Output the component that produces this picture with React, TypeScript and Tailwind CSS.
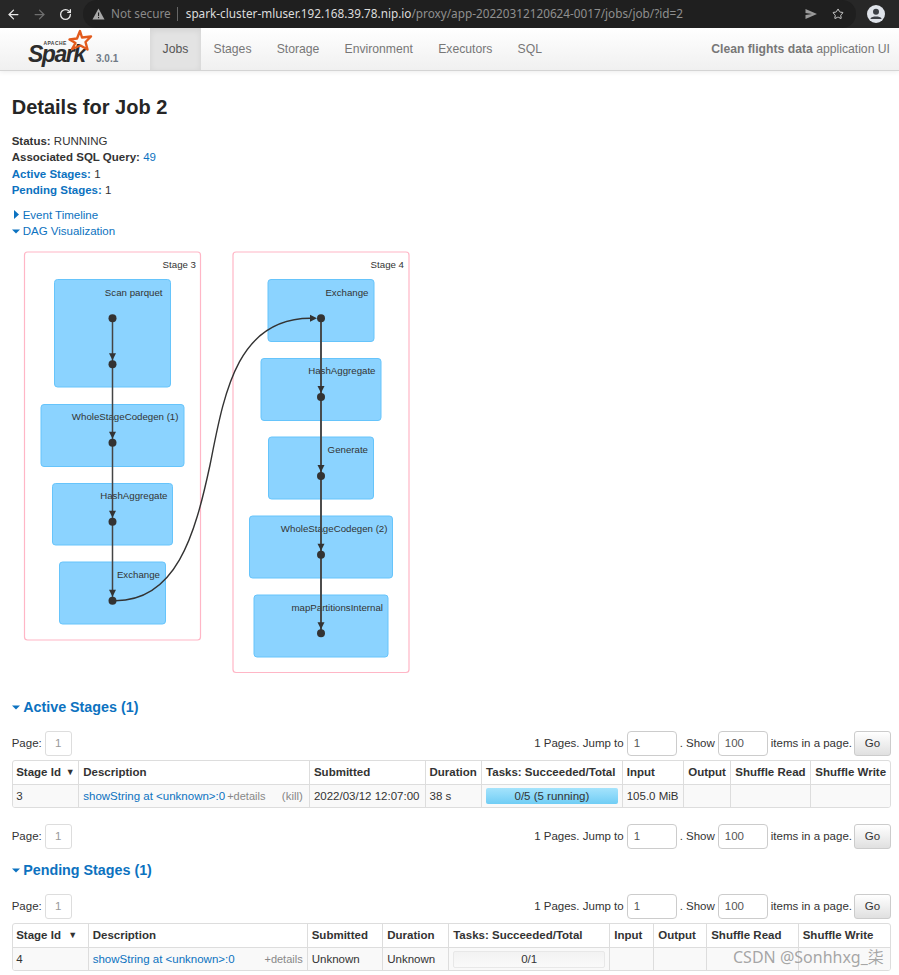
import React from "react";
import { ArrowLeft, ArrowRight, RotateCw, Star } from "lucide-react";

function Caret({ open }: { open: boolean }) {
  return open ? (
    <svg width="8" height="5" viewBox="0 0 8 5" className="shrink-0"><path d="M0 0.5H8L4 4.5Z" fill="#0c72c0" /></svg>
  ) : (
    <svg width="5" height="9" viewBox="0 0 5 9" className="shrink-0 ml-[2px]"><path d="M0 0V9L5 4.5Z" fill="#0c72c0" /></svg>
  );
}

function NavItem({ label, active }: { label: string; active?: boolean }) {
  return (
    <div className={active ? "h-full flex items-center px-[12.6px] bg-[#e3e3e3] text-[#555] shadow-[inset_0_2px_6px_rgba(0,0,0,0.08)]" : "h-full flex items-center px-[12.6px] text-[#777]"}>
      {label}
    </div>
  );
}

function Pagination() {
  return (
    <div className="flex items-center justify-between h-[25px] text-[11.5px] text-[#333]">
      <div className="flex items-center gap-[3px]">
        <span>Page:</span>
        <span className="w-[27px] h-[25px] flex items-center justify-center border border-[#ddd] rounded-[3px] text-[#999] bg-white">1</span>
      </div>
      <div className="flex items-center">
        <span>1 Pages. Jump to</span>
        <span className="ml-[3px] w-[50px] h-[25px] flex items-center pl-[6px] border border-[#ccc] rounded-[4px] bg-white text-[#555]">1</span>
        <span className="ml-[3px]">. Show</span>
        <span className="ml-[3px] w-[50px] h-[25px] flex items-center pl-[6px] border border-[#ccc] rounded-[4px] bg-white text-[#555]">100</span>
        <span className="ml-[3px]">items in a page.</span>
        <span className="ml-[2px] w-[37px] h-[25px] flex items-center justify-center border border-[#ccc] rounded-[3px] bg-gradient-to-b from-white to-[#e0e0e0] text-[#333]">Go</span>
      </div>
    </div>
  );
}

const th = "h-[23px] px-[4px] first:px-[3.5px] text-left font-bold text-[#333] border-l border-[#ddd] first:border-l-0 whitespace-nowrap overflow-hidden";
const td = "h-[23px] px-[4px] first:px-[3.5px] text-[#333] border-l border-t border-[#ddd] first:border-l-0 whitespace-nowrap overflow-hidden";

function ActiveTable() {
  return (
    <div className="border border-[#ddd] rounded-[3px] overflow-hidden text-[11.5px] h-[48px]">
      <table className="w-full table-fixed border-collapse">
        <colgroup>
          <col className="w-[66px]" /><col className="w-[230.5px]" /><col className="w-[115.5px]" /><col className="w-[56.5px]" /><col className="w-[140.5px]" /><col className="w-[61.5px]" /><col className="w-[47px]" /><col className="w-[80px]" /><col className="w-[79px]" />
        </colgroup>
        <thead>
          <tr>
            <th className={th}><div className="flex items-center justify-between"><span>Stage Id</span><span className="text-[9px]">▼</span></div></th>
            <th className={th}>Description</th>
            <th className={th}>Submitted</th>
            <th className={th}>Duration</th>
            <th className={th}>Tasks: Succeeded/Total</th>
            <th className={th}>Input</th>
            <th className={th}>Output</th>
            <th className={th}>Shuffle Read</th>
            <th className={th}>Shuffle Write</th>
          </tr>
        </thead>
        <tbody className="bg-[#f9f9f9]">
          <tr>
            <td className={td}>3</td>
            <td className={td}>
              <div className="flex items-center pr-[2px]">
                <span className="text-[#0c72c0]">showString at &lt;unknown&gt;:0</span>
                <span className="ml-[2px] text-[11px] text-[#888]">+details</span>
                <span className="ml-auto text-[#888]">(kill)</span>
              </div>
            </td>
            <td className={td}>2022/03/12 12:07:00</td>
            <td className={td}>38 s</td>
            <td className={td}>
              <div className="h-[16px] rounded-[2px] bg-gradient-to-b from-[#a4e3fc] to-[#6fcdf5] flex items-center justify-center">0/5 (5 running)</div>
            </td>
            <td className={td}>105.0 MiB</td>
            <td className={td}></td>
            <td className={td}></td>
            <td className={td}></td>
          </tr>
        </tbody>
      </table>
    </div>
  );
}

function PendingTable() {
  return (
    <div className="border border-[#ddd] rounded-[3px] overflow-hidden text-[11.5px] h-[48px]">
      <table className="w-full table-fixed border-collapse">
        <colgroup>
          <col className="w-[75.5px]" /><col className="w-[219px]" /><col className="w-[75.5px]" /><col className="w-[66px]" /><col className="w-[161px]" /><col className="w-[44px]" /><col className="w-[53px]" /><col className="w-[91.5px]" /><col className="w-[92px]" />
        </colgroup>
        <thead>
          <tr>
            <th className={th}><div className="flex items-center justify-between pr-[7px]"><span>Stage Id</span><span className="text-[9px]">▼</span></div></th>
            <th className={th}>Description</th>
            <th className={th}>Submitted</th>
            <th className={th}>Duration</th>
            <th className={th}>Tasks: Succeeded/Total</th>
            <th className={th}>Input</th>
            <th className={th}>Output</th>
            <th className={th}>Shuffle Read</th>
            <th className={th}>Shuffle Write</th>
          </tr>
        </thead>
        <tbody className="bg-[#f9f9f9]">
          <tr>
            <td className={td}>4</td>
            <td className={td}>
              <div className="flex items-center">
                <span className="text-[#0c72c0]">showString at &lt;unknown&gt;:0</span>
                <span className="ml-auto text-[11px] text-[#888]">+details</span>
              </div>
            </td>
            <td className={td}>Unknown</td>
            <td className={td}>Unknown</td>
            <td className={td}>
              <div className="h-[17px] rounded-[2px] border border-[#e8e8e8] bg-gradient-to-b from-[#f2f2f2] to-[#fafafa] flex items-center justify-center">0/1</div>
            </td>
            <td className={td}></td>
            <td className={td}></td>
            <td className={td}></td>
            <td className={td}></td>
          </tr>
        </tbody>
      </table>
    </div>
  );
}

const nodes = [
  { x: 54.5, y: 279.5, w: 116, h: 107.5, label: "Scan parquet", tx: 162.5, ty: 295.5 },
  { x: 41, y: 404.5, w: 143, h: 62, label: "WholeStageCodegen (1)", tx: 178.5, ty: 420 },
  { x: 52.5, y: 483.5, w: 120, h: 61.5, label: "HashAggregate", tx: 167.5, ty: 499 },
  { x: 59.5, y: 562, w: 106, h: 62, label: "Exchange", tx: 160, ty: 578 },
  { x: 268, y: 279.5, w: 106, h: 62, label: "Exchange", tx: 368.5, ty: 295.5 },
  { x: 261, y: 358.5, w: 120, h: 62, label: "HashAggregate", tx: 375.5, ty: 374 },
  { x: 268.5, y: 437, w: 105, h: 62, label: "Generate", tx: 368, ty: 453 },
  { x: 249.5, y: 516, w: 143, h: 62, label: "WholeStageCodegen (2)", tx: 387.5, ty: 532 },
  { x: 254, y: 595, w: 134, h: 62, label: "mapPartitionsInternal", tx: 383, ty: 611 },
];
const left = [318.3, 364.3, 442.8, 521.7, 600.7];
const right = [318.3, 397, 476, 554.7, 633.3];

function Dag() {
  return (
    <svg width="410" height="435" viewBox="12 245 410 435" className="block">
      <rect x="24.5" y="252" width="176" height="388" rx="3" fill="#fff" stroke="#ffb6c6" strokeWidth="1.2" />
      <rect x="233" y="252" width="176" height="420.5" rx="3" fill="#fff" stroke="#ffb6c6" strokeWidth="1.2" />
      <text x="196" y="267.5" textAnchor="end" fontSize="9.7" fill="#333">Stage 3</text>
      <text x="404" y="267.5" textAnchor="end" fontSize="9.7" fill="#333">Stage 4</text>
      {nodes.map((n) => (
        <g key={n.label + n.x}>
          <rect x={n.x} y={n.y} width={n.w} height={n.h} rx="3" fill="#8bd3ff" stroke="#66c4fb" strokeWidth="1" />
          <text x={n.tx} y={n.ty} textAnchor="end" fontSize="9.7" fill="#333">{n.label}</text>
        </g>
      ))}
      <path d="M112.5 318V600" stroke="#444" strokeWidth="1.5" />
      <path d="M321 318V633" stroke="#444" strokeWidth="1.9" />
      <path d="M112.5 600.7C176 603 195 535 210 465C224 395 236 318 311 318.3" fill="none" stroke="#333" strokeWidth="1.4" />
      <path d="M310 314.8L317 318.3L310 321.8Z" fill="#333" />
      {left.map((y) => <circle key={y} cx="112.5" cy={y} r="4" fill="#333" />)}
      {right.map((y) => <circle key={y} cx="321" cy={y} r="4" fill="#333" />)}
      {left.slice(1).map((y) => <path key={y} d={`M109 ${y - 11}H116L112.5 ${y - 4}Z`} fill="#333" />)}
      {right.slice(1).map((y) => <path key={y} d={`M317.5 ${y - 11}H324.5L321 ${y - 4}Z`} fill="#333" />)}
    </svg>
  );
}

export default function App() {
  return (
    <div className="relative w-[899px] h-[975px] overflow-hidden bg-white font-['Liberation_Sans',Arial,sans-serif]">
      {/* browser bar */}
      <div className="h-[28px] bg-[#272727] flex items-center text-[11.75px] font-['Noto_Sans','Open_Sans',sans-serif]">
        <ArrowLeft size={15} className="ml-[6px] text-[#e8e8e8]" />
        <ArrowRight size={15} className="ml-[11px] text-[#6f6f6f]" />
        <RotateCw size={13} className="ml-[12px] text-[#e8e8e8]" strokeWidth={2.4} />
        <div className="ml-[11px] h-[28px] w-[773px] rounded-full bg-[#1f1f1f] flex items-center">
          <svg width="13" height="12" viewBox="0 0 13 12" className="ml-[9px]"><path d="M6.5 0.5L12.5 11.5H0.5Z" fill="#a8a8a8" /><rect x="6" y="4.5" width="1.1" height="3.6" fill="#1f1f1f" /><rect x="6" y="9" width="1.1" height="1.2" fill="#1f1f1f" /></svg>
          <span className="ml-[6px] text-[#8a8a8a]">Not secure</span>
          <span className="ml-[6px] w-px h-[14px] bg-[#666]" />
          <span className="ml-[8px] text-[#dcdcdc] whitespace-nowrap">spark-cluster-mluser.192.168.39.78.nip.io<span className="text-[#8f8f8f]">/proxy/app-20220312120624-0017/jobs/job/?id=2</span></span>
          <svg width="12" height="12" viewBox="0 0 12 12" className="ml-auto"><path d="M0.5 1L12 6L0.5 11V7L7 6L0.5 5Z" fill="#9a9a9a" /></svg>
          <Star size={12} className="ml-[15px] mr-[12px] text-[#cfcfcf]" />
        </div>
        <svg width="18" height="18" viewBox="0 0 18 18" className="ml-[11px]"><circle cx="9" cy="9" r="9" fill="#dfe3ea" /><circle cx="9" cy="6.8" r="3" fill="#3b3f46" /><path d="M3.6 13.2C4.6 10.8 13.4 10.8 14.4 13.2V14H3.6Z" fill="#3b3f46" /></svg>
      </div>

      {/* nav */}
      <div className="h-[43px] flex items-center bg-gradient-to-b from-white to-[#f0f0f0] border-b border-[#d4d4d4] shadow-[0_1px_5px_rgba(0,0,0,0.08)] text-[12.2px]">
        <div className="w-[150px] h-full shrink-0 flex items-center">
          <div className="relative ml-[28px] w-[90px] h-full">
            <span className="absolute left-[15.5px] top-[12px] text-[5px] leading-[6px] font-bold tracking-[0.4px] text-[#444]">APACHE</span>
            <span className="absolute left-0 top-[14px] text-[23px] leading-[25px] font-bold italic tracking-[-1.5px] text-[#2c2c2c]">Spark</span>
            <svg width="26" height="24" viewBox="0 0 26 24" className="absolute left-[39px] top-[1px]"><path d="M13 2L15 8.5L24 7.5L18.5 13L20.5 20.5L13.5 16.5L5 20L8.5 14L2.5 10.5L10 9.5Z" fill="none" stroke="#e25a1c" strokeWidth="2.4" strokeLinejoin="round" /></svg>
            <span className="absolute left-[68px] top-[23px] text-[10px] font-bold text-[#707a85]">3.0.1</span>
          </div>
        </div>
        <NavItem label="Jobs" active />
        <NavItem label="Stages" />
        <NavItem label="Storage" />
        <NavItem label="Environment" />
        <NavItem label="Executors" />
        <NavItem label="SQL" />
        <div className="ml-auto mr-[9px] text-[#777] whitespace-nowrap"><b>Clean flights data</b> application UI</div>
      </div>

      {/* content */}
      <div className="pl-[11.7px] pr-[8px] text-[11.5px] text-[#333]">
        <h3 className="mt-[22px] text-[20px] leading-[28px] font-bold text-[#262626]">Details for Job 2</h3>
        <ul className="mt-[12px] leading-[16.4px]">
          <li><b>Status:</b> RUNNING</li>
          <li><b>Associated SQL Query:</b> <span className="text-[#0c72c0]">49</span></li>
          <li><b className="text-[#0c72c0]">Active Stages:</b> 1</li>
          <li><b className="text-[#0c72c0]">Pending Stages:</b> 1</li>
        </ul>
        <div className="mt-[8px] leading-[16.4px] text-[#0c72c0]">
          <div className="flex items-center gap-[4px]"><Caret open={false} />Event Timeline</div>
          <div className="flex items-center gap-[3px]"><Caret open />DAG Visualization</div>
        </div>
        <div className="mt-[6px]"><Dag /></div>

        <div className="mt-[15px] h-[24px] flex items-center gap-[3.5px] text-[14.3px] font-bold text-[#0c72c0]"><Caret open />Active Stages (1)</div>
        <div className="mt-[12px]"><Pagination /></div>
        <div className="mt-[4px]"><ActiveTable /></div>
        <div className="mt-[16px]"><Pagination /></div>

        <div className="mt-[9px] h-[24px] flex items-center gap-[3.5px] text-[14.3px] font-bold text-[#0c72c0]"><Caret open />Pending Stages (1)</div>
        <div className="mt-[12px]"><Pagination /></div>
        <div className="mt-[4px]"><PendingTable /></div>
      </div>

      <div className="absolute left-[733px] top-[946px] text-[16px] leading-[22px] text-[#8f8f8f]/80 font-['Noto_Sans','Noto_Sans_CJK_SC',sans-serif] whitespace-nowrap">CSDN @Sonhhxg_柒</div>
    </div>
  );
}
